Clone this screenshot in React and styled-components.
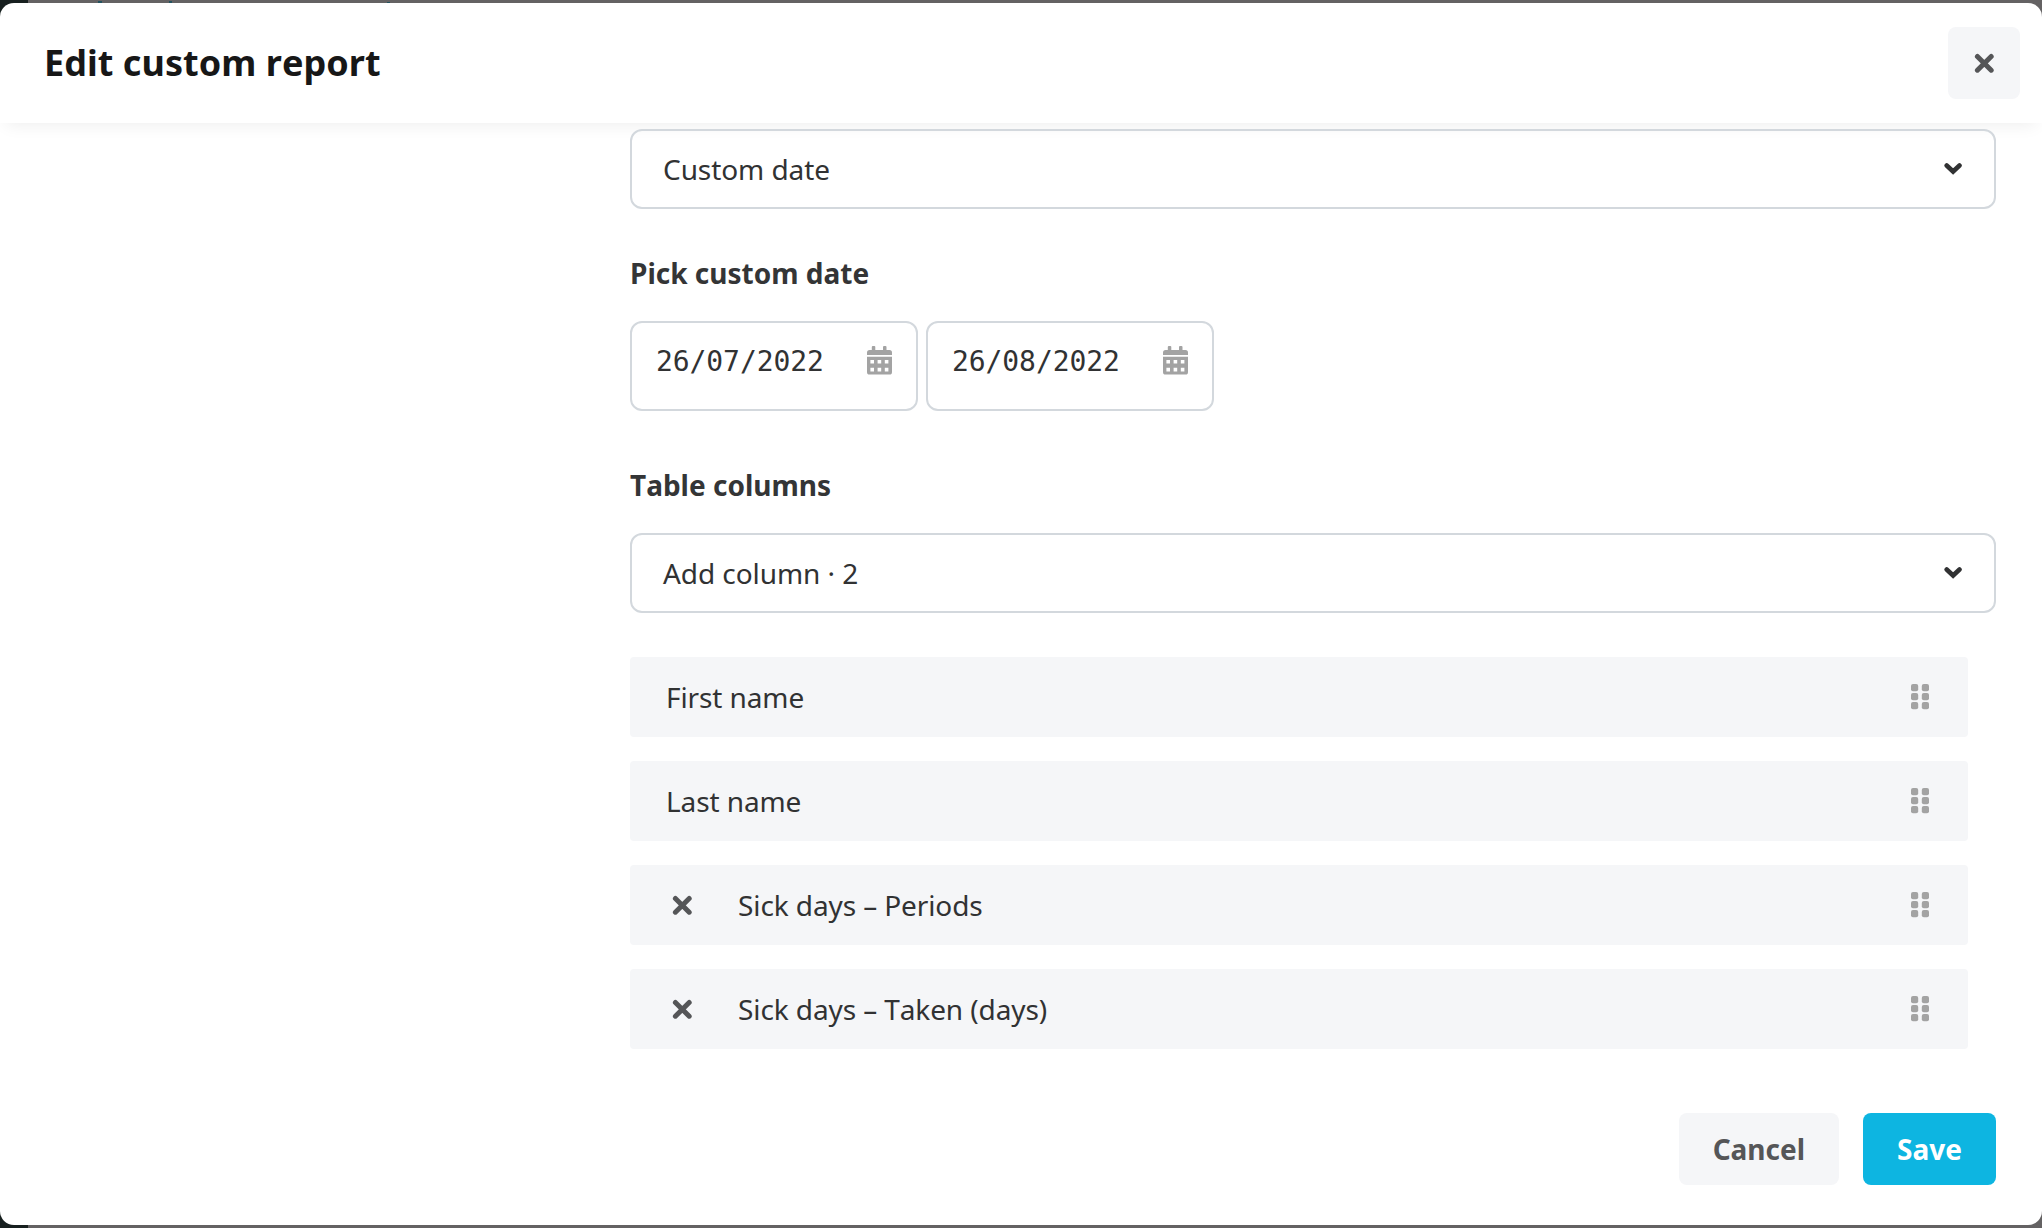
import React from "react";
import styled, { createGlobalStyle } from "styled-components";

const theme = {
  white: "#fff",
  black: "#171717",
  text: "#313233",
  textBold: "#343536",
  muted: "#555658",
  icon: "#a3a3a3",
  border: "#d3d8dd",
  light: "#f5f6f8",
  primary: "#0db5e1",
  overlay: "#646263",
  overlayLink: "#23525f",
  sidebar: "#17201f"
};

const GlobalStyle = createGlobalStyle`
  * {
    box-sizing: border-box;
  }

  body {
    margin: 0;
    font-family: "Noto Sans", "Open Sans", sans-serif;
    font-size: 28px;
    font-kerning: none;
    color: ${theme.text};
  }
`;

/* The page under the modal: dark sidebar, grey content, tips of its links */
const Backdrop = styled.div`
  height: 100vh;
  padding: 3px 0;
  overflow: hidden;
  background: linear-gradient(${theme.overlayLink}, ${theme.overlayLink}) 98px
      1px / 4px 2px no-repeat,
    linear-gradient(${theme.overlayLink}, ${theme.overlayLink}) 169px 1px / 3px
      2px no-repeat,
    linear-gradient(${theme.overlayLink}, ${theme.overlayLink}) 387px 2px / 3px
      1px no-repeat,
    linear-gradient(to right, ${theme.sidebar} 28px, ${theme.overlay} 28px);
`;

const Modal = styled.div`
  height: 100%;
  display: flex;
  flex-direction: column;
  overflow: hidden;
  background: ${theme.white};
  border-radius: 14px;
`;

const Header = styled.header`
  flex: none;
  height: 120px;
  padding: 0 22px 0 44px;
  display: flex;
  align-items: center;
  justify-content: space-between;
  box-shadow: 0 8px 16px -6px rgba(0, 0, 0, 0.07);
`;

const Title = styled.h1`
  margin: 0;
  font-size: 36px;
  line-height: 48px;
  font-weight: 700;
  letter-spacing: 0.04px;
  color: ${theme.black};
`;

const Button = styled.button`
  height: 72px;
  padding: 0 34px;
  border: 0;
  border-radius: 8px;
  font: inherit;
  font-weight: 700;
  color: ${props => (props.$primary ? theme.white : theme.muted)};
  background: ${props => (props.$primary ? theme.primary : theme.light)};
`;

const CloseButton = styled(Button)`
  width: 72px;
  padding: 0;
  display: flex;
  align-items: center;
  justify-content: center;
`;

const Body = styled.main`
  flex: 1;
  padding: 6px 46px 0 630px;
`;

const Select = styled.div`
  height: 80px;
  padding: 0 32px 0 31px;
  display: flex;
  align-items: center;
  justify-content: space-between;
  border: 2px solid ${theme.border};
  border-radius: 12px;
  letter-spacing: -0.07px;
`;

const Label = styled.div`
  margin: ${props => props.$top}px 0 28px;
  line-height: 40px;
  font-weight: 700;
  color: ${theme.textBold};
`;

const Dates = styled.div`
  display: flex;
  gap: 8px;
`;

const DateInput = styled.div`
  width: 288px;
  height: 90px;
  padding: 0 24px 10px;
  display: flex;
  align-items: center;
  justify-content: space-between;
  border: 2px solid ${theme.border};
  border-radius: 12px;
  font-family: "DejaVu Sans Mono", monospace;
  letter-spacing: -0.08px;
`;

const Columns = styled.ul`
  margin: 44px 28px 0 0;
  padding: 0;
  display: flex;
  flex-direction: column;
  gap: 24px;
  list-style: none;
`;

const Column = styled.li`
  height: 80px;
  padding: 0 39px 0 ${props => (props.$removable ? 42 : 36)}px;
  display: flex;
  align-items: center;
  border-radius: 4px;
  background: ${theme.light};
`;

const ColumnName = styled.span`
  flex: 1;
  margin-left: ${props => (props.$removable ? 46 : 0)}px;
  letter-spacing: -0.1px;
`;

const Footer = styled.footer`
  flex: none;
  padding: 0 46px 40px;
  display: flex;
  justify-content: flex-end;
  gap: 24px;
`;

const Cross = () => (
  <svg width="20" height="20" viewBox="0 0 20 20" fill="none">
    <path
      d="M3.4 3.4L17.2 17.2M17.2 3.4L3.4 17.2"
      stroke={theme.muted}
      strokeWidth="5"
      strokeLinecap="round"
    />
  </svg>
);

const Chevron = () => (
  <svg width="18" height="12" viewBox="0 0 18 12" fill="none">
    <path
      d="M2.7 2.5L9.1 8.5L15.5 2.5"
      stroke={theme.text}
      strokeWidth="4.6"
      strokeLinecap="round"
    />
  </svg>
);

const Calendar = () => (
  <svg width="25" height="30" viewBox="0 0 25 30" fill={theme.icon}>
    <rect x="4.8" y="0" width="3.5" height="6" rx="1" />
    <rect x="16" y="0" width="3.5" height="6" rx="1" />
    <path d="M0 9V6.5Q0 4 2.5 4H22.5Q25 4 25 6.5V9Z" />
    <path
      fillRule="evenodd"
      d="M0 10.8H25V26Q25 28.6 22.5 28.6H2.5Q0 28.6 0 26Z
        M3.4 14h3.6v3.6h-3.6z M10.6 14h3.6v3.6h-3.6z M17.8 14h3.6v3.6h-3.6z
        M3.4 21.8h3.6v3.6h-3.6z M10.6 21.8h3.6v3.6h-3.6z M17.8 21.8h3.6v3.6h-3.6z"
    />
  </svg>
);

const Grip = () => (
  <svg width="18" height="26" viewBox="0 0 18 26" fill={theme.icon}>
    {[0, 9, 18].map(y => (
      <React.Fragment key={y}>
        <rect x="0" y={y} width="7.2" height="7.2" rx="2" />
        <rect x="10.8" y={y} width="7.2" height="7.2" rx="2" />
      </React.Fragment>
    ))}
  </svg>
);

const columns = [
  { name: "First name" },
  { name: "Last name" },
  { name: "Sick days – Periods", removable: true },
  { name: "Sick days – Taken (days)", removable: true }
];

const App = () => (
  <Backdrop>
    <GlobalStyle />
    <Modal>
      <Header>
        <Title>Edit custom report</Title>
        <CloseButton aria-label="Close">
          <Cross />
        </CloseButton>
      </Header>
      <Body>
        <Select>
          <span>Custom date</span>
          <Chevron />
        </Select>
        <Label $top={44}>Pick custom date</Label>
        <Dates>
          {["26/07/2022", "26/08/2022"].map(date => (
            <DateInput key={date}>
              <span>{date}</span>
              <Calendar />
            </DateInput>
          ))}
        </Dates>
        <Label $top={54}>Table columns</Label>
        <Select>
          <span>Add column · 2</span>
          <Chevron />
        </Select>
        <Columns>
          {columns.map(({ name, removable }) => (
            <Column key={name} $removable={removable}>
              {removable && <Cross />}
              <ColumnName $removable={removable}>{name}</ColumnName>
              <Grip />
            </Column>
          ))}
        </Columns>
      </Body>
      <Footer>
        <Button>Cancel</Button>
        <Button $primary>Save</Button>
      </Footer>
    </Modal>
  </Backdrop>
);

export default App;
